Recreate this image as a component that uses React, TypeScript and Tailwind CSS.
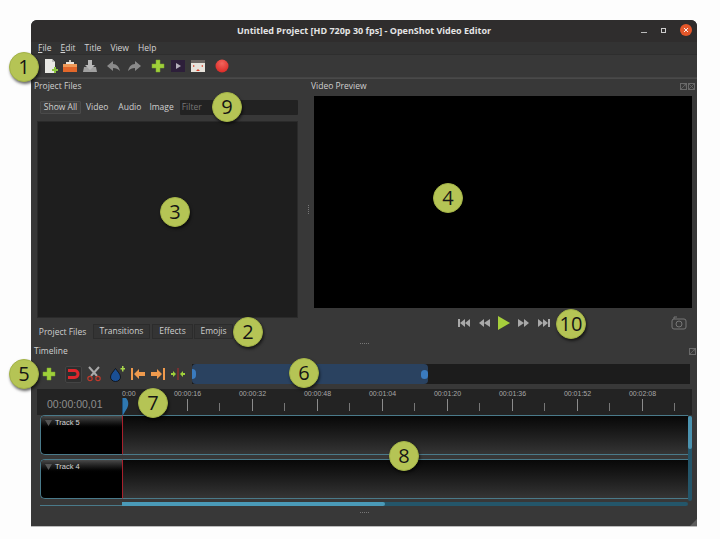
import type { ReactNode } from 'react';

const font = "[font-family:'Open_Sans','Noto_Sans',sans-serif]";

const badges = [
  { n: '1', cls: 'left-[9px] top-[52px]' },
  { n: '9', cls: 'left-[212px] top-[92px]' },
  { n: '3', cls: 'left-[160px] top-[197px]' },
  { n: '4', cls: 'left-[433px] top-[183px]' },
  { n: '2', cls: 'left-[233px] top-[317px]' },
  { n: '10', cls: 'left-[556px] top-[309px]' },
  { n: '5', cls: 'left-[9px] top-[359px]' },
  { n: '6', cls: 'left-[289px] top-[358px]' },
  { n: '7', cls: 'left-[138px] top-[388px]' },
  { n: '8', cls: 'left-[389px] top-[441px]' },
];

const Badge = ({ n, cls }: { n: string; cls: string }) => (
  <div
    className={`absolute ${cls} w-[30px] h-[30px] rounded-full bg-[#b5c455] border border-[#a3b347] shadow-[1px_2px_3px_rgba(0,0,0,0.6)] flex items-center justify-center text-[20px] text-[#151515] ${font}`}
  >
    {n}
  </div>
);

const Ico = ({ children, w = 16 }: { children: ReactNode; w?: number }) => (
  <svg width={w} height={16} viewBox={`0 0 ${w} 16`} className="shrink-0">
    {children}
  </svg>
);

const DockIcons = () => (
  <div className="flex gap-[1px]">
    {[0, 1].map((i) => (
      <svg key={i} width="7" height="7" viewBox="0 0 7 7">
        <rect x="0.5" y="0.5" width="6" height="6" fill="none" stroke="#6a6a6a" strokeWidth="1" />
        <path d={i ? 'M1 1 6 6M6 1 1 6' : 'M1 6 6 1M3.500 1H6v2.500'} stroke="#6a6a6a" strokeWidth="0.8" fill="none" />
      </svg>
    ))}
  </div>
);

const Plus = () => (
  <Ico>
    <path d="M6 2h4v4h4v4h-4v4H6v-4H2V6h4z" fill="#9fd03a" stroke="#7ea82c" strokeWidth="0.5" />
  </Ico>
);

const MainToolbar = () => (
  <div className="h-[23px] bg-[#383838] flex items-center pl-[11px] border-b border-[#444]">
    <div className="flex items-center gap-[4px]">
      <Ico>
        <path d="M3 1h7l3 3v11H3z" fill="#e8e8e4" />
        <path d="M10 1v3h3z" fill="#bbb" />
        <path d="M10 11h2V9h2v2h2v2h-2v2h-2v-2h-2z" fill="#8cc63f" />
      </Ico>
      <Ico>
        <path d="M1 6h14v8H1z" fill="#e2672a" />
        <path d="M1 6h14v3H1z" fill="#f09a58" />
        <path d="M4 4h8v2H4z" fill="#e8e4dc" />
        <path d="M7 2h2v2H7z" fill="#c9c4b8" />
      </Ico>
      <Ico>
        <path d="M2 9h12l1 5H1z" fill="#a0a0a0" />
        <path d="M6 2h4v5h3l-5 5-5-5h3z" fill="#b8b8b8" />
      </Ico>
      <div className="w-0" />
      <Ico>
        <path d="M7 3 1 8l6 5v-3c3 0 5 1 7 3-1-4-3-7-7-7z" fill="#8a8a8a" />
      </Ico>
      <Ico>
        <path d="M9 3l6 5-6 5v-3c-3 0-5 1-7 3 1-4 3-7 7-7z" fill="#8a8a8a" />
      </Ico>
      <div className="w-0" />
      <Plus />
      <Ico>
        <rect x="1" y="2" width="14" height="12" fill="#2d1f3a" />
        <path d="M6 5v6l5-3z" fill="#b5b0bc" />
      </Ico>
      <Ico>
        <rect x="1" y="2" width="14" height="12" fill="#e6e2da" />
        <rect x="1" y="2" width="14" height="3" fill="#6a6460" />
        <path d="M3 7l2 1-2 1zM13 7l-2 1 2 1zM6 13l2-2 2 2z" fill="#d8402a" />
      </Ico>
      <div className="w-0" />
      <Ico>
        <defs>
          <radialGradient id="rec" cx="50%" cy="30%" r="70%">
            <stop offset="0%" stopColor="#f2645c" />
            <stop offset="100%" stopColor="#dc2a26" />
          </radialGradient>
        </defs>
        <circle cx="8" cy="8" r="6.5" fill="url(#rec)" />
      </Ico>
    </div>
  </div>
);

const ProjectFiles = () => (
  <div className="w-[274px] shrink-0 flex flex-col pl-[6px]">
    <div className="h-[14px] flex items-center -ml-[3px] text-[8.5px] text-[#cfcfcf]">Project Files</div>
    <div className="h-[16px] mt-[6px] flex items-center text-[8.5px] text-[#d0d0d0]">
      <div className="ml-[3px] w-[41px] h-[13px] flex items-center justify-center border border-[#4a4a4a] bg-[#3e3e3e] rounded-[1px]">Show All</div>
      <span className="ml-[5px]">Video</span>
      <span className="ml-[10px]">Audio</span>
      <span className="ml-[8px]">Image</span>
      <div className="ml-[6px] w-[118px] h-[15px] bg-[#222] rounded-[1px] px-[2px] flex items-center text-[#777]">Filter</div>
    </div>
    <div className="h-[197px] mt-[6px] w-[261px] bg-[#1e1e1e] border border-[#2a2a2a]" />
    <div className="h-[16px] mt-[6px] flex items-start text-[8.5px] text-[#cfcfcf]">
      <div className="h-[16px] w-[61px] -ml-[5px] pt-[1px] flex items-center justify-center bg-[#383838]">Project Files</div>
      <div className="h-[15px] w-[57px] flex items-center justify-center bg-[#343434] border border-[#2c2c2c]">Transitions</div>
      <div className="h-[15px] w-[41px] flex items-center justify-center bg-[#343434] border border-[#2c2c2c] ml-[2px]">Effects</div>
      <div className="h-[15px] w-[39px] flex items-center justify-center bg-[#343434] border border-[#2c2c2c] ml-[1px]">Emojis</div>
    </div>
  </div>
);

const VideoPreview = () => (
  <div className="flex-1 flex flex-col min-w-0">
    <div className="h-[14px] flex items-center justify-between pr-[2px] text-[8.5px] text-[#cfcfcf]">
      <span>Video Preview</span>
      <DockIcons />
    </div>
    <div className="h-[212px] mt-[3px] ml-[3px] mr-[5px] bg-black" />
    <div className="h-[30px] flex items-center relative">
      <div className="ml-[145px] flex items-center gap-[4px]">
        <Ico>
          <path d="M2 4h2v8H2zM9 4v8L4 8zM14 4v8L9 8z" fill="#a9a9a9" />
        </Ico>
        <Ico>
          <path d="M8 4v8L3 8zM14 4v8L8 8z" fill="#a9a9a9" />
        </Ico>
        <Ico>
          <path d="M2 1v14l12-7z" fill="#a6cf3c" />
        </Ico>
        <Ico>
          <path d="M2 4v8l6-4zM8 4v8l5-4z" fill="#a9a9a9" />
        </Ico>
        <Ico>
          <path d="M2 4v8l5-4zM7 4v8l5-4zM12 4h2v8h-2z" fill="#a9a9a9" />
        </Ico>
      </div>
      <svg width="16" height="14" viewBox="0 0 16 14" className="ml-auto mr-[10px]">
        <rect x="1" y="3" width="14" height="10" rx="2" fill="none" stroke="#777" strokeWidth="1" />
        <path d="M3 3V1h3" stroke="#777" fill="none" />
        <circle cx="8" cy="8" r="3" fill="none" stroke="#777" strokeWidth="1" />
      </svg>
    </div>
  </div>
);

const TimelineToolbar = () => (
  <div className="h-[24px] mt-[5px] flex items-center pl-[10px] pr-[7px]">
    <Plus />
    <div className="ml-[8px] w-[17px] h-[17px] rounded-[2px] bg-[#2e2e2e] border border-[#444] flex items-center justify-center">
      <svg width="13" height="12" viewBox="0 0 13 12">
        <path d="M1 1h6.500a5 5 0 0 1 0 10H1V8h6.500a2 2 0 0 0 0-4H1z" fill="#e0262c" />
      </svg>
    </div>
    <div className="ml-[4px]">
      <Ico>
        <path d="M3 1l8 9M13 1L5 10" stroke="#aaa" strokeWidth="2" fill="none" />
        <circle cx="4" cy="12.500" r="2.200" fill="none" stroke="#c0392b" strokeWidth="1.200" />
        <circle cx="12" cy="12.500" r="2.200" fill="none" stroke="#c0392b" strokeWidth="1.200" />
      </Ico>
    </div>
    <div className="ml-[7px]">
      <Ico>
        <path d="M6.500 2.500c2 3 5 5.500 5 8.500a5 4.500 0 0 1-10 0c0-3 3-5.500 5-8.500z" fill="#1a4f94" stroke="#0c0c0c" strokeWidth="0.8" />
        <path d="M11.500 2h1.500V0h1.500v2H16v1.500h-1.500v2H13v-2h-1.500z" fill="#a9d84b" />
      </Ico>
    </div>
    <div className="ml-[5px] flex gap-[4px] items-center">
      <Ico>
        <path d="M1 2h2v12H1zM4 8l5-5v3h6v4H9v3z" fill="#ef9a4d" />
      </Ico>
      <Ico>
        <path d="M13 2h2v12h-2zM12 8L7 3v3H1v4h6v3z" fill="#ef9a4d" />
      </Ico>
      <Ico>
        <path d="M8 2v12" stroke="#b02a2a" strokeWidth="1" />
        <path d="M1 7h2V5l3 3-3 3V9H1zM15 7h-2V5l-3 3 3 3V9h2z" fill="#9fd03a" />
      </Ico>
    </div>
    <div className="ml-[6px] flex-1 h-[20px] bg-[#1c1c1c] flex items-center">
      <div className="w-[236px] h-full bg-[#2a4260] flex items-center justify-between rounded-[4px]">
        <div className="w-[4px] h-[10px] bg-[#3a7bbf] rounded-r-full" />
        <div className="w-[7px] h-[9px] bg-[#3a7bbf] rounded-full" />
      </div>
    </div>
  </div>
);

const rulerMarks = ['00:00:16', '00:00:32', '00:00:48', '00:01:04', '00:01:20', '00:01:36', '00:01:52', '00:02:08'];

const Ruler = () => (
  <div className="h-[26px] mt-[3px] mx-[6px] mr-[5px] bg-[#232323] flex relative">
    <div className="w-[85px] shrink-0 flex items-end pb-[4px] pl-[10px] text-[10.5px] leading-[14px] text-[#8e8e8e] [font-family:'Liberation_Sans',sans-serif]">
      00:00:00,01
    </div>
    <div className="flex pl-[33px] [font-family:'Liberation_Sans',sans-serif]">
      {rulerMarks.map((m) => (
        <div key={m} className="w-[65px] flex flex-col items-center relative">
          <span className="text-[7px] leading-[9px] text-[#a8a8a8]">{m}</span>
          <div className="w-px h-[12px] mt-[1px] bg-[#8c8c8c]" />
          <div className="absolute left-[64px] bottom-[4px] w-px h-[8px] bg-[#777]" />
        </div>
      ))}
    </div>
    <span className="absolute left-[85px] top-0 text-[7px] leading-[9px] text-[#a8a8a8] [font-family:'Liberation_Sans',sans-serif]">0:00</span>
    <svg width="9" height="17" viewBox="0 0 9 17" className="absolute left-[84px] top-[9px]">
      <path d="M1 0h4c3 3 3 8 0 12l-3 5H1z" fill="#2f78b0" />
      <path d="M1 0h1v17H1z" fill="#1e4f78" />
    </svg>
  </div>
);

const Track = ({ name, last }: { name: string; last?: boolean }) => (
  <div className={`h-[40px] flex ${last ? 'mt-[4px]' : ''}`}>
    <div className="w-[82px] shrink-0 rounded-l-[5px] border border-r-0 border-[#4a7a8a] bg-black flex flex-col overflow-hidden">
      <div className="h-[14px] flex items-center pl-[4px] gap-[3px] bg-gradient-to-b from-[#4a4a4a] to-black text-[7.5px] text-[#d5d5d5] [font-family:'Liberation_Sans',sans-serif]">
        <svg width="7" height="6" viewBox="0 0 7 6">
          <path d="M0 0h7L3.500 6z" fill="#555" />
        </svg>
        {name}
      </div>
    </div>
    <div className="flex-1 border-y border-[#4a7a8a] border-l border-l-[#a8202c] bg-gradient-to-b from-[#080808] to-[#353535]" />
  </div>
);

const Timeline = () => (
  <div className="flex flex-col">
    <div className="h-[11px] flex items-center justify-between pl-[3px] pr-[1px] text-[8.5px] text-[#cfcfcf]">
      <span>Timeline</span>
      <svg width="7" height="7" viewBox="0 0 7 7">
        <rect x="0.5" y="0.5" width="6" height="6" fill="none" stroke="#6a6a6a" />
        <path d="M1 6 6 1M3.500 1H6v2.500" stroke="#6a6a6a" strokeWidth="0.8" fill="none" />
      </svg>
    </div>
    <TimelineToolbar />
    <Ruler />
    <div className="ml-[9px] mr-[5px] flex">
      <div className="flex-1 min-w-0 flex flex-col">
        <Track name="Track 5" />
        <Track name="Track 4" last />
      </div>
      <div className="w-[4px] h-[85px] mt-[1px] bg-[#24566a] rounded-full">
        <div className="h-[33px] bg-[#4b93b0] rounded-full" />
      </div>
    </div>
    <div className="ml-[9px] mr-[9px] h-[4px] mt-[1px] flex">
      <div className="w-[82px] border-b border-[#4a7a8a]" />
      <div className="flex-1 bg-[#24566a] rounded-r-full">
        <div className="w-[263px] h-full bg-[#4a9ab8] rounded-r-full" />
      </div>
    </div>
  </div>
);

const Grip = ({ vertical }: { vertical?: boolean }) => (
  <div className={`flex ${vertical ? 'flex-col' : ''} gap-[1px]`}>
    {[0, 1, 2, 3, 4].map((i) => (
      <div key={i} className="w-px h-px bg-[#777]" />
    ))}
  </div>
);

export default function App() {
  return (
    <div className={`relative w-[720px] h-[539px] overflow-hidden bg-[#fdfdfd] pt-[20px] pl-[31px] ${font}`}>
      <div className="relative w-[666px] h-[507px] bg-[#383838] rounded-t-[6px] flex flex-col overflow-hidden border-b border-[#bbb]">
        <div className="h-[22px] shrink-0 bg-[#2f2d2d] flex items-center relative">
          <div className="w-full text-center text-[9px] font-bold text-[#e4e4e4]">
            Untitled Project [HD 720p 30 fps] - OpenShot Video Editor
          </div>
          <div className="absolute right-[5px] top-[4px] flex items-center gap-[14px]">
            <div className="w-[6px] h-px mt-[4px] bg-[#bbb]" />
            <div className="w-[5px] h-[5px] border border-[#ccc]" />
            <div className="w-[12px] h-[12px] rounded-full bg-[#e4572a] flex items-center justify-center">
              <svg width="6" height="6" viewBox="0 0 6 6">
                <path d="M1 1l4 4M5 1L1 5" stroke="#f5f5f5" strokeWidth="1" />
              </svg>
            </div>
          </div>
        </div>
        <div className="h-[13px] shrink-0 bg-[#333] border-b border-[#2e2e2e] flex items-center pl-[7px] gap-[9px] text-[8.5px] text-[#d4d4d4]">
          <span><u>F</u>ile</span>
          <span><u>E</u>dit</span>
          <span>Title</span>
          <span>View</span>
          <span>Help</span>
        </div>
        <MainToolbar />
        <div className="h-px bg-[#4a4a4a]" />
        <div className="h-[261px] flex shrink-0">
          <ProjectFiles />
          <div className="w-[6px] flex items-center justify-center">
            <Grip vertical />
          </div>
          <VideoPreview />
        </div>
        <div className="h-[6px] flex items-center justify-center">
          <Grip />
        </div>
        <Timeline />
        <div className="flex-1 flex items-start justify-center pt-[6px]">
          <Grip />
        </div>
        <svg width="7" height="7" viewBox="0 0 7 7" className="absolute right-0 bottom-0">
          <path d="M7 0v7H0z" fill="#5c5c5c" />
        </svg>
      </div>
      {badges.map((b) => (
        <Badge key={b.n} n={b.n} cls={b.cls} />
      ))}
    </div>
  );
}
